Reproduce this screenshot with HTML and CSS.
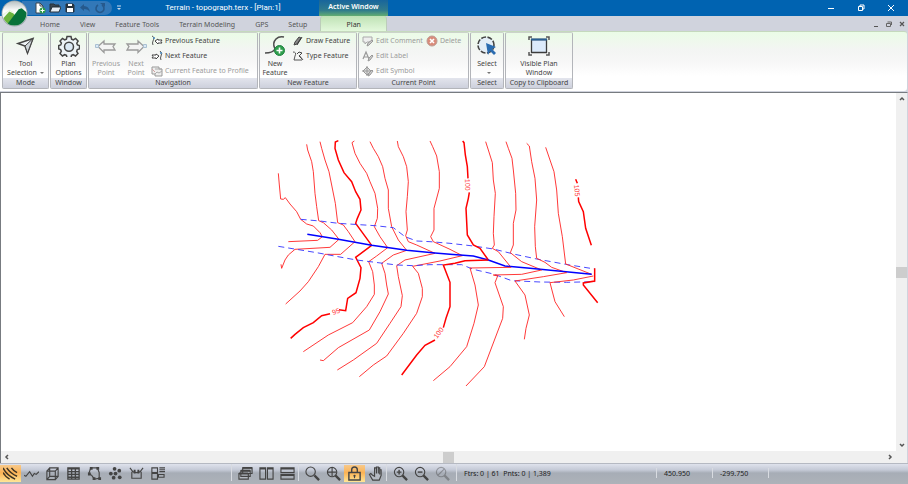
FILE: index.html
```html
<!DOCTYPE html>
<html lang="en">
<head>
<meta charset="utf-8">
<title>Terrain - topograph.terx - [Plan:1]</title>
<link rel="stylesheet" href="styles.css">
</head>
<body>
<header class="titlebar">
  <button class="orb" aria-label="Application menu">
    <svg viewBox="0 0 26 26"><defs><linearGradient id="sky" x2="0" y2="1"><stop offset="0" stop-color="#b9c2c4"/><stop offset=".4" stop-color="#fff"/><stop offset="1" stop-color="#dfeee0"/></linearGradient><clipPath id="ball"><circle cx="13" cy="13" r="11.5"/></clipPath></defs><circle cx="13" cy="13" r="12.5" fill="#9aa7ad"/><circle cx="13" cy="13" r="11.7" fill="url(#sky)"/><g clip-path="url(#ball)"><path d="M0 20 8 11 12 13 15 17 8 26H0Z" fill="#6ab43e"/><path d="M4 26 17 9 20 8 26 13V26Z" fill="#08713a"/><path d="M1 15 8 10 12 12" fill="none" stroke="#e8f5da"/></g></svg>
  </button>
  <div class="quick">
    <button aria-label="New"><svg viewBox="0 0 12 12"><path d="M2 1h4l3 3v7H2Z" fill="#fff" stroke="#3a4650"/><path d="M6 1v3h3" fill="none" stroke="#3a4650"/><circle cx="8.500" cy="8.500" r="3" fill="#2b9b48"/><path d="M8.500 6.500v4M6.500 8.500h4" stroke="#fff"/></svg></button>
    <button aria-label="Open"><svg viewBox="0 0 12 12"><path d="M1 10V2h4l1 1h4v2H3L1 10" fill="#3a4650" stroke="#26323c"/><path d="M1 10 3 5h9l-2 5Z" fill="#e6edf4" stroke="#26323c"/></svg></button>
    <button aria-label="Save"><svg viewBox="0 0 12 12"><path d="M2 2h7l1 1v7H2Z" fill="#26323c" stroke="#26323c"/><path d="M4 2h4v2H4ZM3 6h6v4H3Z" fill="#fff"/></svg></button>
    <button aria-label="Undo"><svg viewBox="0 0 12 12"><path d="M5 2v2q5 0 6 6-2-3-6-3v2L1 5.500Z" fill="#26598c"/></svg></button>
    <button aria-label="Redo"><svg viewBox="0 0 12 12"><path d="M4 3a4 4 0 1 0 4 0" fill="none" stroke="#26598c" stroke-width="1.600"/><path d="M6 1h5v4Z" fill="#26598c"/></svg></button>
  </div>
  <button class="more" aria-label="Customize"><svg viewBox="0 0 6 6"><path d="M1 1h4" stroke="#cde"/><path d="M1 3h4L3 5Z" fill="#cde"/></svg></button>
  <h1 class="title">Terrain - topograph.terx - [Plan:1]</h1>
  <div class="context">Active Window</div>
  <div class="winbtns">
    <button aria-label="Minimize"><svg viewBox="0 0 8 8"><path d="M1 4.500h6" stroke="#fff"/></svg></button>
    <button aria-label="Restore"><svg viewBox="0 0 8 8"><path d="M1.500 2.500h4v4h-4ZM3 2V1h4v4H6" fill="none" stroke="#fff"/></svg></button>
    <button aria-label="Close"><svg viewBox="0 0 8 8"><path d="m1 1 6 6M7 1 1 7" stroke="#fff"/></svg></button>
  </div>
</header>
<nav class="tabs">
  <a href="#">Home</a><a href="#">View</a><a href="#">Feature Tools</a><a href="#">Terrain Modeling</a><a href="#">GPS</a><a href="#">Setup</a><a href="#" class="active">Plan</a>
  <div class="mdi">
    <button aria-label="Minimize document"><svg viewBox="0 0 8 8"><path d="M2 6.500h4" stroke="#555"/></svg></button>
    <button aria-label="Restore document"><svg viewBox="0 0 8 8"><path d="M1.500 3.500h4v3h-4ZM2.500 2h4v3" fill="none" stroke="#666"/></svg></button>
    <button aria-label="Close document"><svg viewBox="0 0 8 8"><path d="m2 2 4 4M6 2 2 6" stroke="#555" stroke-width="1.200"/></svg></button>
  </div>
</nav>
<main class="ribbon">
  <section class="group mode">
    <div class="body"><button class="big"><svg viewBox="0 0 22 22"><path d="M3 8.500 18 3.500 12.500 18 10 11Z" fill="#eef3f6" stroke="#454545" stroke-width="1.500"/><path d="m10 11 8-7.500L12.500 18Z" fill="#cfd6db" stroke="#454545"/></svg><span>Tool<br>Selection<i class="caret"></i></span></button></div>
    <h2>Mode</h2>
  </section>
  <section class="group window">
    <div class="body"><button class="big"><svg viewBox="0 0 22 22"><path d="m9 1.500h4l.6 2.600 1.700.7 2.300-1.400 2.500 2.600-1.300 2.200.7 1.800 2 .6v3.300l-2.200.6-.6 1.800 1.300 2.200-2.500 2.500-2.300-1.300-1.700.7-.5 2.400H9l-.6-2.400-1.700-.7-2.200 1.300L2 18.500l1.300-2.200-.7-1.800-1.900-.6v-3.300l2-.6.700-1.800L2 6l2.500-2.600 2.200 1.400 1.700-.7Z" fill="#edf3f7" stroke="#454545" stroke-width="1.500"/><circle cx="11" cy="11.700" r="4.500" fill="#dce9f5" stroke="#454545" stroke-width="1.500"/></svg><span>Plan<br>Options</span></button></div>
    <h2>Window</h2>
  </section>
  <section class="group navigation">
    <div class="body">
      <button class="big wide" disabled><svg viewBox="0 0 22 22"><path d="M3 11.500 9 6v3h11l-2 2.500 2 3.500H9v2.500Z" fill="#f4f4f4" stroke="#9b9b9b" stroke-width="1.300"/><path d="M.5 9.500h3v3h-3Z" fill="#dbe9f4" stroke="#a9c0d2"/></svg><span>Previous<br>Point</span></button>
      <button class="big" disabled><svg viewBox="0 0 22 22"><path d="M19 11.500 13 6v3H2l2 2.500L2 15h11v2.500Z" fill="#f4f4f4" stroke="#9b9b9b" stroke-width="1.300"/><path d="M18.500 9.500h3v3h-3Z" fill="#dbe9f4" stroke="#a9c0d2"/></svg><span>Next<br>Point</span></button>
      <div class="rows">
        <button class="small"><svg viewBox="0 0 12 12"><path d="M1 1q3 1 1 5-1 2 0 4" fill="none" stroke="#555"/><path d="M4 6 7 4v1h4L10 6.500 11 8H7v1Z" fill="#fff" stroke="#444"/><circle cx="3" cy="3" r="1" fill="#4a8bc2"/></svg>Previous Feature</button>
        <button class="small"><svg viewBox="0 0 12 12"><path d="M9 1q3 2 1 5-1 2 0 4" fill="none" stroke="#555"/><path d="M8 6 5 4v1H1l1 1.500L1 8h4v1Z" fill="#fff" stroke="#444"/><circle cx="10" cy="3" r="1" fill="#4a8bc2"/></svg>Next Feature</button>
        <button class="small" disabled><svg viewBox="0 0 12 12"><path d="M1 2h7v2h3v7H4V9H1Z" fill="#eee" stroke="#999"/><path d="M4 4h7M4 9l2-2 2 1 3-2" fill="none" stroke="#aaa"/><path d="M1 4 4 7" stroke="#d0a0a0"/></svg>Current Feature to Profile</button>
      </div>
    </div>
    <h2>Navigation</h2>
  </section>
  <section class="group feature">
    <div class="body">
      <button class="big"><svg viewBox="0 0 22 22"><path d="M1 18q8 0 10-4Q8 8 12 4q3-3 8-2" fill="none" stroke="#4c4c4c" stroke-width="1.600"/><circle cx="15.500" cy="15.500" r="5" fill="#2f9e4c" stroke="#1f8440"/><path d="M15.500 12.500v6M12.500 15.500h6" stroke="#fff" stroke-width="1.600"/></svg><span>New<br>Feature</span></button>
      <div class="rows">
        <button class="small"><svg viewBox="0 0 12 12"><path d="m2 10 1-3 4-5 2 1-4 6Z" fill="#888" stroke="#444"/><path d="m5 10 5-8" stroke="#333"/></svg>Draw Feature</button>
        <button class="small"><svg viewBox="0 0 12 12"><path d="M1 2q4 0 2 4l-1 4h8" fill="none" stroke="#555"/><path d="m5 4 2-2 3 1-3 3 3 3" fill="none" stroke="#444"/><path d="m7 5 4 5" stroke="#555"/></svg>Type Feature</button>
      </div>
    </div>
    <h2>New Feature</h2>
  </section>
  <section class="group current">
    <div class="body">
      <div class="rows">
        <button class="small" disabled><svg viewBox="0 0 12 12"><path d="M1 2h9v5H5L3 9V7H1Z" fill="#eee" stroke="#aaa"/><path d="m5 11 1-3 4-3 1 1-4 4Z" fill="#ccc" stroke="#999"/></svg>Edit Comment</button>
        <button class="small" disabled><svg viewBox="0 0 12 12"><path d="M1 9 4 2l3 7M2 7h4" fill="none" stroke="#999" stroke-width="1.200"/><path d="m6 11 1-3 3-3 1 1-3 4Z" fill="#ccc" stroke="#999"/></svg>Edit Label</button>
        <button class="small" disabled><svg viewBox="0 0 12 12"><path d="M5 1v10M0 6h10M5 2 9 6 5 10 1 6Z" fill="#ddd" stroke="#999"/><path d="m6 11 1-3 3-3 1 1-3 4Z" fill="#ccc" stroke="#999"/></svg>Edit Symbol</button>
      </div>
      <div class="rows">
        <button class="small" disabled><svg viewBox="0 0 12 12"><circle cx="6" cy="6" r="5" fill="#d98c7a" stroke="#bd9b92"/><path d="m4 4 4 4M8 4 4 8" stroke="#fff" stroke-width="1.600"/></svg>Delete</button>
      </div>
    </div>
    <h2>Current Point</h2>
  </section>
  <section class="group select">
    <div class="body"><button class="big"><svg viewBox="0 0 22 22"><circle cx="10" cy="10" r="8" fill="#e4eef7" stroke="#444" stroke-width="1.600" stroke-dasharray="5 1.500"/><path d="m10 8 10 4-4 2 4 4-2 2-4-4-2 4Z" fill="#2b6cb0"/></svg><span>Select<br><i class="caret"></i></span></button></div>
    <h2>Select</h2>
  </section>
  <section class="group clipboard">
    <div class="body"><button class="big"><svg viewBox="0 0 22 22"><path d="M1 5V2h3M18 2h3v3M21 17v3h-3M4 20H1v-3" fill="none" stroke="#555" stroke-width="1.500"/><path d="M3.500 4.500h15v13h-15Z" fill="#dceafa" stroke="#3c3c3c" stroke-width="1.300"/><path d="M3 4.500h16" stroke="#2a5f92" stroke-width="2"/></svg><span>Visible Plan<br>Window</span></button></div>
    <h2>Copy to Clipboard</h2>
  </section>
</main>
<div class="view">
  <svg class="plan" viewBox="1 93 895 358" preserveAspectRatio="xMinYMin meet" role="img" aria-label="Contour plan">
    <g transform="translate(270 130) scale(.33333)">
      <path class="thin" d="M25 130 28 165 32 207 40 208 46 203 60 222 80 245 92 268 110 282 130 288 150 308 157 320 143 331 55 335M110 43 113 60 125 95 130 125 135 190 140 230 146 272 160 278 185 300 207 328M150 35 155 55 165 90 177 125 188 180 196 220 203 278 220 285 235 305 255 335M253 33 246 38 255 70 270 100 290 130 300 155 315 190 323 235 322 265 313 290 330 320 353 353M300 35 310 55 325 80 338 110 345 145 355 180 355 235 365 290 385 330 410 361M382 33 385 50 400 80 410 110 415 155 412 200 408 245 412 300 407 317 415 335 440 345 495 370"/>
      <path class="thick" d="M205 32 196 36 195 55 205 90 222 128 245 155 257 185 270 208 273 240 262 265 257 280 275 305 305 346"/>
      <path class="dash" d="M92 268 150 273 205 280 315 287 370 293 405 320 440 333 480 335 540 340 610 348 670 357 735 373 800 387 887 403 974 417"/>
    </g>
    <g transform="translate(430 130) scale(.33333)">
      <path class="thin" d="M0 33 8 50 20 78 28 125 28 175 12 235 12 300 2 320 10 335 60 358 97 377M167 35 175 60 187 98 190 150 196 190 192 260 190 310 193 345 187 355 205 365 243 412M228 35 235 55 246 85 250 120 257 190 258 240 250 280 250 345 241 368 275 395 335 420M290 40 298 48 305 95 315 145 320 210 314 290 316 350 320 385 345 397 365 412 410 428M347 52 372 125 380 180 385 250 397 320 407 402 485 433"/>
      <path class="thick" d="M98 33 102 38 106 75 112 110 114 145M118 187 115 205 108 235 112 315 130 345 150 355 175 390M437 148 442 160M445 202 446 215 460 245 467 295 484 346"/>
    </g>
    <g transform="translate(270 225) scale(.33333)">
      <path class="thin" d="M207 43 180 67 75 73 55 90 45 105 35 130 33 118M255 50 212 88 165 88 145 125 115 170 90 198 47 237M353 68 320 93 296 110 308 140 313 180 313 208 290 245 248 293 175 330 100 380M410 76 370 90 335 115 345 145 350 180 355 207 330 260 298 315 205 368 160 407 150 405M495 85 405 105 380 122 385 155 397 212 393 245 360 295 320 355 250 405 202 435M577 92 510 108 428 124 445 145 457 190 457 215 440 265 400 325 350 393 310 420 268 455"/>
      <path class="thick" d="M305 61 257 97 273 128 270 160 258 203 233 220 227 257 207 254M180 266 155 272 130 293 100 308 75 328 62 340"/>
      <path class="dash" d="M25 64 140 83 220 98 260 105 300 110 380 120 430 122 480 119 575 119 610 133 670 147 725 167 810 171 890 172 974 170"/>
      <path class="stream" d="M112 28 205 43 305 61 410 76 495 84 540 88 610 93 655 105 705 123 780 130 965 148"/>
    </g>
    <g transform="translate(430 225) scale(.33333)">
      <path class="thin" d="M243 127 120 129 135 180 145 240 132 295 110 365 60 425 10 467M335 135 275 148 190 150 203 153 195 173 220 245 218 280 163 425 108 483M410 143 340 155 255 168 285 210 298 270 288 310 283 343M490 153 430 165 360 173 375 230 403 275"/>
      <path class="thick" d="M175 105 105 107 75 115 40 120 60 172 60 245 48 280 40 308M15 345-15 361-40 390-85 450M494 130 494 168 460 174 460 180 503 233"/>
    </g>
    <g class="elev">
      <text transform="translate(465 179) rotate(88)">100</text>
      <text transform="translate(574 185) rotate(84)">105</text>
      <text transform="translate(333 315) rotate(-18)">95</text>
      <text transform="translate(437 339) rotate(-53)">100</text>
    </g>
  </svg>
  <div class="vscroll"><svg viewBox="0 0 8 8"><path d="m2 5 2-2 2 2"/></svg><i class="thumb"></i><svg viewBox="0 0 8 8"><path d="m2 3 2 2 2-2"/></svg></div>
  <div class="hscroll"><svg viewBox="0 0 8 8"><path d="M5 2 3 4l2 2"/></svg><i class="thumb"></i><svg viewBox="0 0 8 8"><path d="m3 2 2 2-2 2"/></svg></div>
  <div class="corner"></div>
</div>
<footer class="status">
  <div class="tools first">
    <button class="on" aria-label="Contours"><svg viewBox="0 0 16 16"><path d="M0 2q4 8 13 12M4 2q4 6 11 9M9 2q2 3 6 5M0 7q2 4 7 7" fill="none" stroke="#3e3423" stroke-width="1.600"/></svg></button>
    <button aria-label="Profile"><svg viewBox="0 0 16 16"><path d="m0 10 2 1 4-5 3 5 2-3 2 1 3-3" fill="none"/></svg></button>
    <button aria-label="3D view"><svg viewBox="0 0 16 16"><path d="M2 5.500h9v9H2ZM5 2h9v9H5ZM2 5.500 5 2M11 5.500 14 2M2 14.500 5 11M11 14.500l3-3.500" fill="none"/></svg></button>
    <button aria-label="Grid"><svg viewBox="0 0 16 16"><path d="M2 2h12v12H2ZM2 3h12M2 6h12M2 9h12M2 12h12M6 2v12M10 2v12" fill="none" stroke-width="1.400"/></svg></button>
    <button aria-label="Polygon"><svg viewBox="0 0 16 16"><path d="M4 2h7l2 5v6l-5 1-3-4-3-2Z" fill="none"/><path class="dot" d="M3 1h3v3H3ZM10 1h3v3h-3ZM12 12h3v3h-3ZM6 12h3v3H6ZM1 7h3v3H1Z"/></svg></button>
    <button aria-label="Points"><svg viewBox="0 0 16 16"><g class="dot"><circle cx="7" cy="3" r="2"/><circle cx="12" cy="5" r="2"/><circle cx="3" cy="8" r="2"/><circle cx="8" cy="8" r="2"/><circle cx="6" cy="12.500" r="2"/><circle cx="12.500" cy="12" r="2"/></g></svg></button>
    <button aria-label="Cross section"><svg viewBox="0 0 16 16"><path d="m1 2 3 4q4 2 8 0l3-4M3 6v7h10V6" fill="none"/><path class="dot" d="M5 4h2v4H5ZM9 4h2v4H9Z"/></svg></button>
    <button aria-label="Layout"><svg viewBox="0 0 16 16"><path d="M2 2h6v5H2ZM2 8h6v6H2ZM10 2h6M10 4h6M10 6h6M9 9h6v3H9Z" fill="none"/></svg></button>
  </div>
  <div class="tools">
    <button aria-label="Cascade"><svg viewBox="0 0 16 16"><path d="M5 2h10v6H5ZM3 5h10v6H3ZM1 8h10v6H1Z" fill="#b5bac2"/><path d="M5 2h10M3 5h10M1 8h10" stroke-width="2"/></svg></button>
    <button aria-label="Tile vertically"><svg viewBox="0 0 16 16"><path d="M1 2h6v12H1ZM9 2h6v12H9ZM1 3h6M9 3h6" fill="none"/></svg></button>
    <button aria-label="Tile horizontally"><svg viewBox="0 0 16 16"><path d="M1 2h14v5H1ZM1 9h14v5H1ZM1 3h14M1 10h14" fill="none"/></svg></button>
  </div>
  <div class="tools">
    <button aria-label="Zoom window"><svg viewBox="0 0 16 16"><circle cx="6" cy="6" r="5" fill="none"/><path d="m10 10 5 5" stroke-width="2.500"/></svg></button>
    <button aria-label="Zoom extents"><svg viewBox="0 0 16 16"><circle cx="6.500" cy="6.500" r="5" fill="none"/><path d="m10 10 5 5" stroke-width="2.500"/><path d="M6.500 2v9M2 6.500h9"/></svg></button>
    <button class="on" aria-label="Lock"><svg viewBox="0 0 16 16"><path d="M5 7V4q0-3 3-3t3 3v3M2 7h12v8H2Z" fill="none" stroke-width="1.500"/><circle class="dot" cx="8" cy="10.500" r="1.200"/><path d="M8 10v3"/></svg></button>
    <button aria-label="Pan"><svg viewBox="0 0 16 16"><path d="m5 10-2-2-1.500 1L5 15h7l2-5V4h-1.500v5V2H11v6V1H9v7-6H7v9Z" fill="#b5bac2"/></svg></button>
  </div>
  <div class="tools">
    <button aria-label="Zoom in"><svg viewBox="0 0 16 16"><circle cx="6.500" cy="6.500" r="5" fill="none"/><path d="m10 10 5 5" stroke-width="2.500"/><path d="M6.500 4v5M4 6.500h5" stroke-width="1.500"/></svg></button>
    <button aria-label="Zoom out"><svg viewBox="0 0 16 16"><circle cx="6.500" cy="6.500" r="5" fill="none"/><path d="m10 10 5 5" stroke-width="2.500"/><path d="M4 6.500h5" stroke-width="1.500"/></svg></button>
    <button aria-label="Zoom previous" disabled><svg viewBox="0 0 16 16"><circle cx="6.500" cy="6.500" r="5" fill="none"/><path d="m10 10 5 5" stroke-width="2.500"/><path d="m3 10 7-7"/></svg></button>
  </div>
  <div class="cell counts">Ftrs: 0 | 61&nbsp; Pnts: 0 | 1,389</div>
  <div class="cell coord">450.950</div>
  <div class="cell coord">-299.750</div>
  <div class="cell rest"></div>
</footer>
</body>
</html>
```
FILE: styles.css
```css
* { box-sizing: border-box; }
body {
  margin: 0;
  height: 100vh;
  display: flex;
  flex-direction: column;
  overflow: hidden;
  background: #d0d3dd;
  color: #444;
  font: 7px/9px "Noto Sans", "Open Sans", sans-serif;
}
button {
  display: flex;
  align-items: center;
  justify-content: center;
  padding: 0;
  border: 0;
  background: none;
  color: inherit;
  font: inherit;
}
h1, h2 { margin: 0; font: inherit; }
svg { display: block; flex: none; }

.titlebar {
  position: relative;
  display: flex;
  align-items: center;
  height: 16px;
  flex: none;
  background: #0063b1;
  color: #fff;
}
.orb { position: absolute; left: 1px; top: 0; z-index: 2; }
.orb svg { width: 27px; height: 27px; }
.quick {
  display: flex;
  align-items: center;
  gap: 3px;
  height: 14px;
  margin-left: 22px;
  padding: 0 6px 0 12px;
  border-radius: 0 8px 8px 0;
  background: #3278b8;
}
.quick svg { width: 12px; height: 12px; }
.more { margin-left: 4px; }
.more svg { width: 6px; height: 6px; }
.title {
  flex: 0 0 197px;
  padding: 0 0 2px 5px;
  font: 8px/9px Roboto, "Noto Sans", sans-serif;
  text-align: center;
  white-space: nowrap;
}
.context {
  width: 69px;
  align-self: stretch;
  padding-top: 2px;
  background: linear-gradient(#17659c, #317c8c 65%, #63ad72);
  text-align: center;
  font-weight: 600;
}
.winbtns { display: flex; margin-left: auto; padding-right: 2px; }
.winbtns button { width: 30px; height: 16px; }
.winbtns svg { width: 8px; height: 8px; }

.tabs { display: flex; flex: none; height: 15px; padding-left: 30px; background: #d0d3dd; }
.tabs a { padding: 4px 10px 0; color: #555; text-decoration: none; }
.tabs .active {
  min-width: 67px;
  margin-left: 3px;
  padding: 4px 0 0;
  border: 1px solid #bccdba;
  border-width: 0 1px;
  border-radius: 3px 3px 0 0;
  background: linear-gradient(#bfe2b5, #e3f8dc);
  color: #333;
  text-align: center;
}
.mdi { display: flex; margin-left: auto; }
.mdi button { width: 13px; }
.mdi svg { width: 8px; height: 8px; }

.ribbon {
  display: flex;
  flex: none;
  gap: 1px;
  height: 60px;
  margin-right: 1px;
  padding: 0 2px 2px;
  border-top: 1px solid #c5d9bd;
  border-radius: 0 3px 3px 0;
  background: linear-gradient(#eafce6, #f3f5f3 30%, #f7f7f7 50%, #fff 75%);
}
.group {
  display: flex;
  flex-direction: column;
  border: 1px solid #b3b5ba;
  border-top-color: #ccd3cb;
  border-radius: 2px;
}
.group h2 {
  flex: none;
  height: 10px;
  background: linear-gradient(#e3e5ed, #cdd0dc);
  text-align: center;
  white-space: nowrap;
}
.body { display: flex; flex: 1; }
.mode { min-width: 47px; }
.window { min-width: 37px; }
.navigation { min-width: 170px; }
.feature { min-width: 98px; }
.current { min-width: 111px; }
.select { min-width: 34px; }
.clipboard { min-width: 68px; }
.big {
  flex: 1;
  flex-direction: column;
  justify-content: flex-start;
  padding-top: 2px;
  white-space: nowrap;
}
.big svg { width: 22px; height: 22px; margin-bottom: 2px; }
.navigation .big, .feature .big { flex: none; width: 26px; }
.navigation .wide { width: 34px; }
.feature .big { width: 30px; }
.rows { display: flex; flex-direction: column; padding-left: 2px; }
.current .rows { padding-left: 3px; }
.small { height: 15px; gap: 2px; justify-content: flex-start; white-space: nowrap; }
.small svg { width: 12px; height: 12px; }
button:disabled { color: #9b9b9b; }
.caret {
  display: inline-block;
  margin-left: 3px;
  vertical-align: middle;
  border: 2px solid transparent;
  border-top-color: #777;
  border-bottom: 0;
}

.view {
  display: grid;
  grid-template: 1fr 12px / 1fr 11px;
  flex: 1;
  min-height: 0;
  margin-top: 1px;
  border: 1px solid #777b80;
  border-right-color: #d0d3dd;
  border-bottom: 0;
  background: #fff;
}
.plan { width: 100%; height: 100%; }
.plan path { fill: none; }
.thin { stroke: #f22; stroke-width: 2.700px; }
.thick { stroke: #f00; stroke-width: 4.500px; }
.dash { stroke: #33f; stroke-width: 2.700px; stroke-dasharray: 18 12; }
.stream { stroke: #00f; stroke-width: 4.500px; }
.elev { fill: #f33; font: 7px "Liberation Sans", sans-serif; }
.vscroll, .hscroll {
  display: flex;
  align-items: center;
  justify-content: space-between;
  background: #f0f0f0;
}
.vscroll { flex-direction: column; padding: 2px 0; }
.hscroll { padding: 0 2px; }
.vscroll svg, .hscroll svg { width: 8px; height: 8px; fill: none; stroke: #555; stroke-width: 1.500px; }
.thumb { width: 11px; height: 11px; background: #cdcdcd; }
.corner { background: #f0f0f0; }

.status {
  display: flex;
  flex: none;
  height: 21px;
  padding-bottom: 3px;
  border-top: 1px solid #b5b9c2;
  background: linear-gradient(#dfe2ec, #c4c9d6 30%, #a7adb6 45%, #adb2b9);
}
.tools { display: flex; padding: 1px 0 0 3px; border-left: 1px solid #d8dbe1; }
.first { flex: 0 0 231px; padding-left: 0; border-left: 0; }
.tools button { width: 21px; height: 17px; }
.tools svg { width: 15px; height: 15px; stroke: #444; stroke-width: 1.200px; }
.tools .dot { fill: #444; stroke: none; }
.tools .on { background: linear-gradient(#f7c98b, #fbb254 45%, #ffe697); }
.tools button:disabled svg { opacity: .4; }
.cell { padding: 5px 0 0 7px; border-left: 1px solid #d8dbe1; color: #222; }
.counts { flex: 0 0 200px; margin-left: 3px; }
.coord { flex: 0 0 56px; }
.coord, .rest { margin: 4px 0 3px; padding-top: 1px; }
```
